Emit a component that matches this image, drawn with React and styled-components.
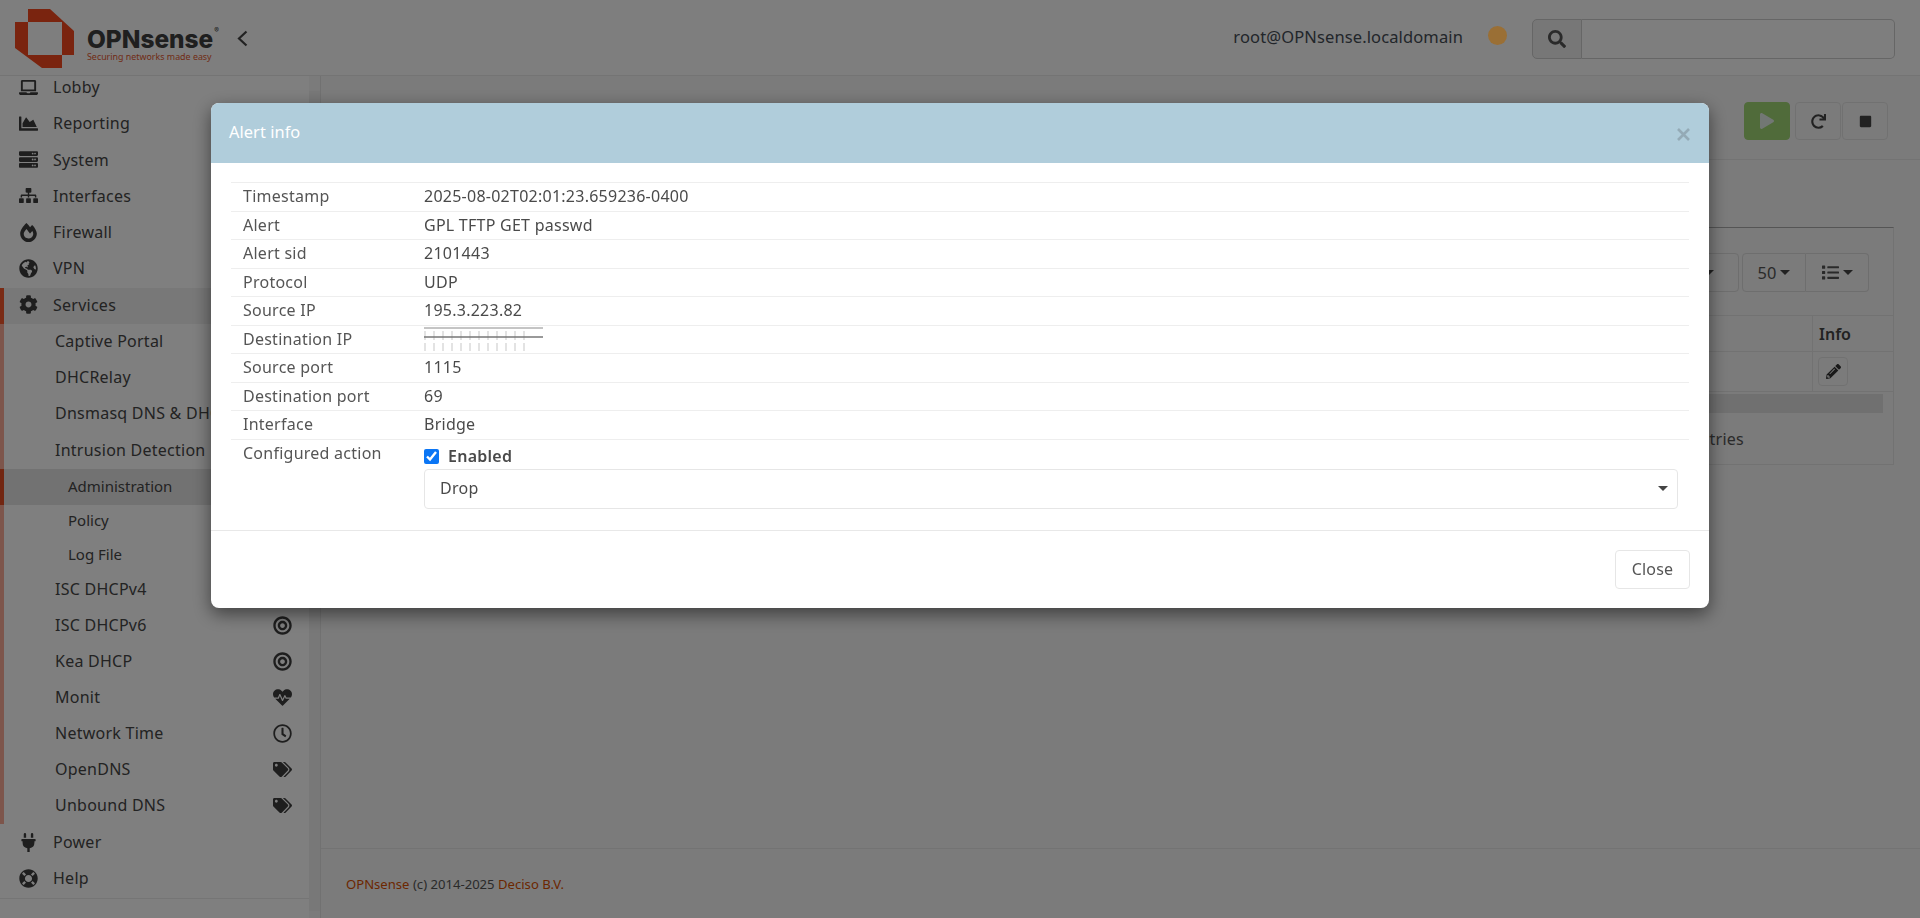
import React from "react";
import styled, { createGlobalStyle } from "styled-components";
import {
  FaLaptop, FaChartArea, FaServer, FaSitemap, FaFireAlt, FaGlobeAmericas, FaCog, FaPlug, FaLifeRing,
  FaBullseye, FaHeartbeat, FaRegClock, FaTags, FaPencilAlt, FaList, FaSearch, FaPlay, FaRedo, FaStop,
} from "react-icons/fa";

const Global = createGlobalStyle`
  html, body { margin: 0; padding: 0; height: 100%; overflow: hidden; background: #f6f6f6; }
  body { font-family: "Noto Sans", "Open Sans", sans-serif; font-size: 16px; color: #444; }
  * { box-sizing: border-box; }
`;

const Page = styled.div`
  width: 1920px; height: 918px; display: flex; flex-direction: column; overflow: hidden;
`;

/* ---------- top bar ---------- */
const TopBar = styled.header`
  height: 76px; flex: none; display: flex; align-items: center; background: #fcfcfc;
  border-bottom: 1px solid #e8e8e8; padding: 0 25px 0 15px;
`;
const LogoBox = styled.div`display: flex; align-items: center; gap: 12px; width: 222px;`;
const LogoWords = styled.div`display: flex; flex-direction: column; margin-top: 15px;`;
const LogoName = styled.div`
  font-family: "Inter", sans-serif; font-weight: 800; font-size: 24.4px; line-height: 24px; color: #3f3f3f;
  white-space: nowrap;
  sup { font-size: 7px; line-height: 7px; font-weight: 500; vertical-align: 15px; margin-left: 1px; }
`;
const LogoTag = styled.div`
  font-family: "Noto Sans", sans-serif; font-size: 8.9px; line-height: 12px; color: #e2572d; white-space: nowrap;
`;
const Collapse = styled.svg`width: 11px; height: 17px; margin-top: 1px;`;
const Spacer = styled.div`flex: 1;`;
const UserName = styled.div`font-size: 16.5px; color: #454c55; margin-right: 25px; margin-top: -3px; letter-spacing: 0.12px;`;
const StatusDot = styled.span`
  width: 19px; height: 19px; border-radius: 50%; background: #9a6f35; position: relative; z-index: 20;
  margin-right: 25px; margin-top: -5px;
`;
const SearchGroup = styled.div`display: flex; width: 363px; height: 40px; margin-top: 2px;`;
const SearchAddon = styled.div`
  width: 50px; display: flex; align-items: center; justify-content: center; background: #eeeeee;
  border: 1px solid #ccc; border-radius: 5px 0 0 5px; color: #555; font-size: 18px;
`;
const SearchInput = styled.div`flex: 1; background: #fdfdfd; border: 1px solid #ccc; border-left: 0; border-radius: 0 5px 5px 0;`;

/* ---------- body ---------- */
const Body = styled.div`flex: 1; display: flex; min-height: 0;`;
const Sidebar = styled.aside`
  width: 321px; flex: none; display: flex; background: #fefefe; border-right: 1px solid #e3e3e3; overflow: hidden;
`;
const NavColumn = styled.nav`width: 309px; flex: none; display: flex; flex-direction: column; margin-top: -6px;`;
const NavList = styled.div`display: flex; flex-direction: column; border-bottom: 1px solid #eaeaea; padding-bottom: 1px;`;
const NavRow = styled.div`
  height: 36.25px; display: flex; align-items: center; color: #464646; font-size: 16px;
  padding-bottom: ${p => (p.$low ? 0 : 2)}px;
  letter-spacing: 0.25px; background: ${p => (p.$active ? "#f0f0f0" : "transparent")};
  border-left: ${p => (p.$active ? "4px solid #f4572a" : "0")};
  padding-left: ${p => (p.$active ? "14px" : "18px")};
`;
const NavIcon = styled.span`width: 20px; display: flex; justify-content: center; font-size: 19px; margin-right: 15px; color: #3c3c3c;`;
const SubList = styled.div`display: flex; flex-direction: column; border-left: 4px solid #fbab97;`;
const SubRow = styled.div`
  height: ${p => (p.$tail ? "36px" : "36.25px")}; display: flex; align-items: center; justify-content: space-between;
  padding: 0 17px 2px 51px; color: #464646; font-size: 16px; letter-spacing: 0.25px; white-space: nowrap;
`;
const SubIcon = styled.span`display: flex; font-size: 19px; color: #3c3c3c;`;
const LeafRow = styled.div`
  height: ${p => (p.$active ? "36.25px" : "33.5px")}; display: flex; align-items: center; font-size: 15px; color: #464646;
  padding: 0 0 ${p => (p.$active ? 1 : 3)}px 64px; margin-left: -4px;
  background: ${p => (p.$active ? "#e5e5e5" : "transparent")};
  border-left: 4px solid ${p => (p.$active ? "#e44d22" : "transparent")};
`;
const ScrollTrack = styled.div`width: 11px; flex: none; background: #f7f7f7; padding-top: 15px;`;
const ScrollThumb = styled.div`height: 820px; background: #f0f0f0;`;

const Main = styled.main`flex: 1; display: flex; flex-direction: column; min-width: 0; background: #f6f6f6;`;
const TitleBar = styled.div`
  height: 84px; flex: none; display: flex; justify-content: flex-end; gap: 1px; padding: 26px 32px 0 0;
  border-bottom: 1px solid #e6e6e6;
`;
const ActionButton = styled.button`
  width: ${p => p.$w || 46}px; height: 38px; padding: 0; display: flex; align-items: center; justify-content: center;
  border-radius: 4px; border: 1px solid ${p => (p.$green ? "#a0d674" : "#e3e3e3")};
  background: ${p => (p.$green ? "#a0d674" : "#f6f6f6")}; color: #444; font-size: 15px;
  margin-right: ${p => p.$mr || 0}px;
`;
const Content = styled.div`padding: 67px 26px 0 19px;`;
const Panel = styled.section`
  height: 238px; background: #f6f6f6; border: 1px solid #e4e4e4; border-top: 1px solid #aaa; display: flex; flex-direction: column;
`;
const GridTools = styled.div`
  height: 88px; flex: none; display: flex; justify-content: flex-end; padding: 25px 24px 0 0; border-bottom: 1px solid #e4e4e4;
`;
const ToolButton = styled.div`
  height: 39px; display: flex; align-items: center; justify-content: center; gap: 4px; border: 1px solid #dcdcdc;
  font-size: 16.4px; color: #555; width: ${p => p.$w}px; margin-left: ${p => p.$ml || 0}px;
  border-radius: ${p => p.$radius || 0};
  border-left-width: ${p => (p.$joined ? 0 : 1)}px;
`;
const Caret = styled.span`
  width: 0; height: 0; border-left: 5px solid transparent; border-right: 5px solid transparent; border-top: 5px solid #444;
`;
const GridHead = styled.div`height: 36px; display: flex; justify-content: flex-end; border-bottom: 1px solid #e4e4e4; flex: none;`;
const GridCell = styled.div`
  width: 81px; border-left: 1px solid #e4e4e4; padding-left: 6px; display: flex; align-items: center;
  font-weight: 600; font-size: 16px; color: #444;
`;
const GridBody = styled.div`height: 40px; display: flex; justify-content: flex-end; border-bottom: 1px solid #e4e4e4; flex: none;`;
const IconCell = styled.div`width: 81px; border-left: 1px solid #e4e4e4; padding: 5px 0 0 5px;`;
const RowButton = styled.div`
  width: 30px; height: 29px; display: flex; align-items: center; justify-content: center; border: 1px solid #e3e3e3;
  border-radius: 4px; font-size: 15px; color: #333;
`;
const GridBand = styled.div`height: 19px; margin: 2px 10px 0 0; background: #e0e0e0; flex: none;`;
const GridFoot = styled.div`flex: 1; display: flex; justify-content: flex-end; align-items: center; padding: 0 149px 0 0; font-size: 16px; letter-spacing: 0.25px; color: #555;`;
const Footer = styled.footer`
  margin-top: auto; height: 70px; flex: none; border-top: 1px solid #e6e6e6; padding: 0 0 0 25px; display: flex; align-items: center;
  font-size: 13.1px; color: #555; white-space: pre;
`;
const FootLink = styled.span`color: #d94f00;`;

/* ---------- modal ---------- */
const Backdrop = styled.div`
  position: fixed; inset: 0; background: rgba(0, 0, 0, 0.5); z-index: 10; display: flex; justify-content: center; align-items: flex-start;
`;
const Modal = styled.div`
  width: 1498px; margin-top: 103px; background: #fff; border-radius: 8px; overflow: hidden;
  box-shadow: 0 6px 18px rgba(0, 0, 0, 0.5);
`;
const ModalHead = styled.div`
  height: 60px; background: #b0cddb; display: flex; align-items: center; justify-content: space-between; padding: 0 19px 3px 18px;
`;
const ModalTitle = styled.h4`margin: 0; font-size: 16.4px; font-weight: 400; color: #fff; letter-spacing: 0.05px;`;
const CloseX = styled.svg`width: 13px; height: 13px; margin-top: 5px;`;
const ModalBody = styled.div`padding: 19px 20px 21px;`;
const InfoRow = styled.div`
  display: grid; grid-template-columns: 193px 1fr; min-height: 28.5px; border-top: 1px solid #eee;
  font-size: 16px; line-height: 27px; color: #555; letter-spacing: 0.25px;
  align-items: ${p => (p.$top ? "start" : "center")};
`;
const InfoLabel = styled.div`padding-left: 12px;`;
const InfoValue = styled.div`color: #4a4a4a;`;
const Redacted = styled.svg`display: block; width: 120px; height: 27px;`;
const CheckLine = styled.label`display: flex; align-items: center; gap: 9px; height: 25px; margin-top: 4px; font-weight: 600; color: #4a4a4a;`;
const CheckBox = styled.input`width: 15px; height: 15px; margin: 0; accent-color: #0b76f5;`;
const SelectBox = styled.div`
  margin: 0 11px 0 0; height: 40px; border: 1px solid #e6e6e6; border-radius: 4px; display: flex; align-items: center; justify-content: space-between;
  padding: 0 9px 0 15px; color: #4a4a4a;
`;
const SelectCaret = styled.span`
  width: 0; height: 0; border-left: 5px solid transparent; border-right: 5px solid transparent; border-top: 5px solid #444;
`;
const ModalFoot = styled.div`
  border-top: 1px solid #e8e8e8; height: 78px; display: flex; justify-content: flex-end; align-items: flex-start; padding: 19px 19px 0 0;
`;
const CloseButton = styled.button`
  width: 75px; height: 39px; background: #fff; border: 1px solid #e6e6e6; border-radius: 4px; color: #555;
  font-family: inherit; font-size: 16px; letter-spacing: 0.2px; padding: 0;
`;

const Logo = () => (
  <svg width="60" height="60" viewBox="15 8 60 60" aria-hidden="true">
    <path
      fillRule="evenodd"
      fill="#f4491f"
      d="M28 9H50L74 31V55H62V68H42L15 48V22H28ZM28 22V55H62V22Z"
    />
  </svg>
);

const topA = [
  [FaLaptop, "Lobby"],
  [FaChartArea, "Reporting"],
  [FaServer, "System"],
  [FaSitemap, "Interfaces"],
  [FaFireAlt, "Firewall"],
  [FaGlobeAmericas, "VPN"],
];
const subA = ["Captive Portal", "DHCRelay", "Dnsmasq DNS & DHCP", "Intrusion Detection"];
const leaves = ["Administration", "Policy", "Log File"];
const subB = [
  ["ISC DHCPv4", FaBullseye],
  ["ISC DHCPv6", FaBullseye],
  ["Kea DHCP", FaBullseye],
  ["Monit", FaHeartbeat],
  ["Network Time", FaRegClock],
  ["OpenDNS", FaTags],
  ["Unbound DNS", FaTags],
];
const rows = [
  ["Timestamp", "2025-08-02T02:01:23.659236-0400"],
  ["Alert", "GPL TFTP GET passwd"],
  ["Alert sid", "2101443"],
  ["Protocol", "UDP"],
  ["Source IP", "195.3.223.82"],
  ["Destination IP", null],
  ["Source port", "1115"],
  ["Destination port", "69"],
  ["Interface", "Bridge"],
];
const ticks = Array.from({ length: 12 }, (_, i) => 1 + i * 9);

export default function App() {
  return (
    <Page>
      <Global />
      <TopBar>
        <LogoBox>
          <Logo />
          <LogoWords>
            <LogoName>OPNsense<sup>®</sup></LogoName>
            <LogoTag>Securing networks made easy</LogoTag>
          </LogoWords>
        </LogoBox>
        <Collapse viewBox="0 0 11 17" aria-hidden="true">
          <path d="M9.5 1.5 2 8.5l7.5 7" fill="none" stroke="#444" strokeWidth="2.2" />
        </Collapse>
        <Spacer />
        <UserName>root@OPNsense.localdomain</UserName>
        <StatusDot />
        <SearchGroup>
          <SearchAddon><FaSearch /></SearchAddon>
          <SearchInput />
        </SearchGroup>
      </TopBar>
      <Body>
        <Sidebar>
          <NavColumn>
            <NavList>
              {topA.map(([I, t]) => (
                <NavRow key={t}><NavIcon><I /></NavIcon>{t}</NavRow>
              ))}
              <NavRow $active><NavIcon><FaCog /></NavIcon>Services</NavRow>
              <SubList>
                {subA.map(t => <SubRow key={t}>{t}</SubRow>)}
                {leaves.map((t, i) => <LeafRow key={t} $active={i === 0}>{t}</LeafRow>)}
                {subB.map(([t, I]) => (
                  <SubRow key={t} $tail>{t}<SubIcon><I /></SubIcon></SubRow>
                ))}
              </SubList>
              <NavRow $low><NavIcon><FaPlug /></NavIcon>Power</NavRow>
              <NavRow $low><NavIcon><FaLifeRing /></NavIcon>Help</NavRow>
            </NavList>
          </NavColumn>
          <ScrollTrack><ScrollThumb /></ScrollTrack>
        </Sidebar>
        <Main>
          <TitleBar>
            <ActionButton $green $mr={4}><FaPlay color="#e4efe8" size={16} /></ActionButton>
            <ActionButton><FaRedo size={15} /></ActionButton>
            <ActionButton><FaStop size={13} /></ActionButton>
          </TitleBar>
          <Content>
            <Panel>
              <GridTools>
                <ToolButton $w={60} $radius="4px">
                  <Caret />
                </ToolButton>
                <ToolButton $w={64} $ml={3} $radius="4px 0 0 4px">50 <Caret /></ToolButton>
                <ToolButton $w={63} $joined $radius="0 4px 4px 0"><FaList size={17} /> <Caret /></ToolButton>
              </GridTools>
              <GridHead><GridCell>Info</GridCell></GridHead>
              <GridBody>
                <IconCell><RowButton><FaPencilAlt /></RowButton></IconCell>
              </GridBody>
              <GridBand />
              <GridFoot>Showing 1 to 1 of 1 entries</GridFoot>
            </Panel>
          </Content>
          <Footer>
            <FootLink>OPNsense</FootLink> (c) 2014-2025 <FootLink>Deciso B.V.</FootLink>
          </Footer>
        </Main>
      </Body>
      <Backdrop>
        <Modal>
          <ModalHead>
            <ModalTitle>Alert info</ModalTitle>
            <CloseX viewBox="0 0 13 13" aria-hidden="true">
              <path d="M1 1 12 12M12 1 1 12" stroke="#94aab6" strokeWidth="2.6" />
            </CloseX>
          </ModalHead>
          <ModalBody>
            {rows.map(([k, v]) => (
              <InfoRow key={k}>
                <InfoLabel>{k}</InfoLabel>
                <InfoValue>
                  {v ?? (
                    <Redacted viewBox="0 0 120 27" aria-hidden="true">
                      {ticks.map(x => (
                        <path key={x} d={`M${x} 5V14M${x} 17V25`} stroke="#dcdcdc" strokeWidth="1.6" />
                      ))}
                      <path d="M0 2H119" stroke="#8a8a8a" strokeWidth="1" />
                      <path d="M0 11H119" stroke="#777" strokeWidth="1.6" />
                    </Redacted>
                  )}
                </InfoValue>
              </InfoRow>
            ))}
            <InfoRow $top>
              <InfoLabel>Configured action</InfoLabel>
              <InfoValue>
                <CheckLine>
                  <CheckBox type="checkbox" defaultChecked />
                  Enabled
                </CheckLine>
                <SelectBox>Drop<SelectCaret /></SelectBox>
              </InfoValue>
            </InfoRow>
          </ModalBody>
          <ModalFoot><CloseButton>Close</CloseButton></ModalFoot>
        </Modal>
      </Backdrop>
    </Page>
  );
}
